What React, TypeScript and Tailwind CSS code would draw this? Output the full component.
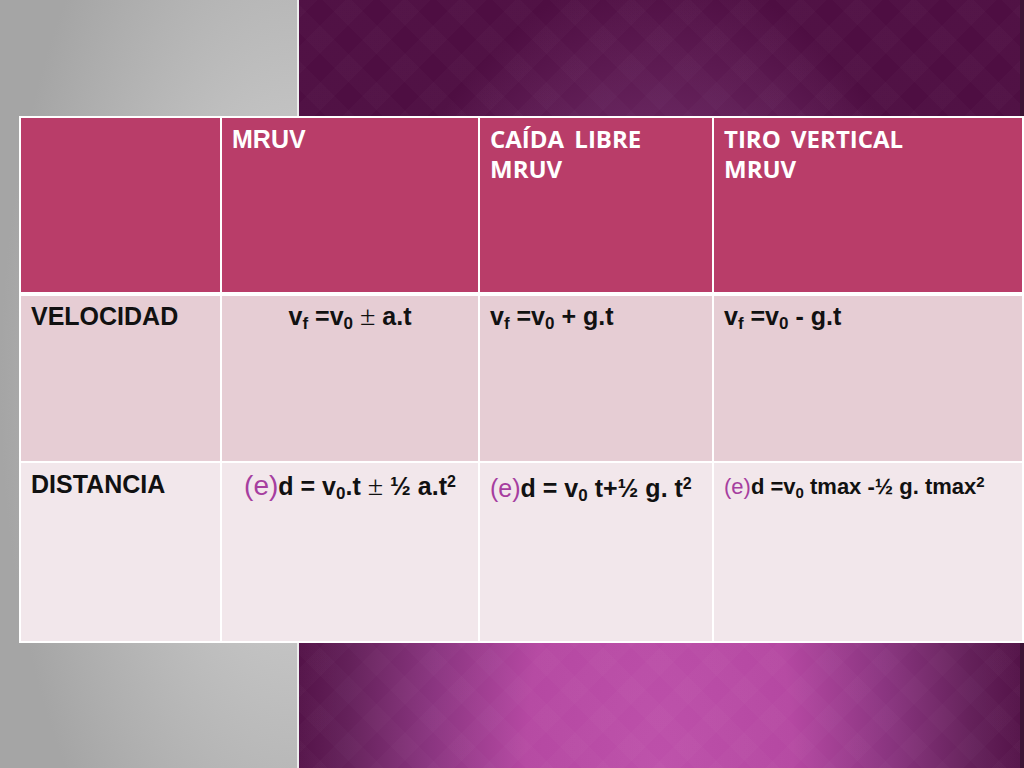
import React from "react";

const arial = "font-['Liberation_Sans',Arial,sans-serif]";

function Cell({ w, bg, className = "", children }: { w: string; bg: string; className?: string; children?: React.ReactNode }) {
  return <div className={`${w} ${bg} shrink-0 px-[10px] ${className}`}>{children}</div>;
}

function PM() {
  return <span className="font-['Liberation_Serif','Times_New_Roman',serif] font-normal text-[28px] leading-[30px]">±</span>;
}

function E({ size }: { size: string }) {
  return <span className={`${size} font-normal text-[#a63e9f]`}>(e)</span>;
}

export default function App() {
  return (
    <div className={`w-[1024px] h-[768px] overflow-hidden grid ${arial}`}>
      {/* background */}
      <div className="col-start-1 row-start-1 flex h-[768px]">
        <div className="w-[297px] [background-image:radial-gradient(ellipse_100%_80%_at_100%_50%,#d0d0d0_0%,#c4c4c4_40%,#a5a5a5_100%)]" />
        <div className="w-[2px] bg-[#ececec]" />
        <div className="flex-1 [background-image:repeating-linear-gradient(45deg,rgba(255,255,255,0.014)_0_20px,transparent_20px_40px),repeating-linear-gradient(-45deg,rgba(255,255,255,0.014)_0_20px,transparent_20px_40px),radial-gradient(ellipse_53%_104%_at_50%_100%,#bd50aa_0%,#b548a2_35%,#8a3580_60%,#64215a_82%,#4e0e42_100%)]" />
        <div className="w-[4px] bg-[#3b1434]" />
      </div>

      {/* table */}
      <div className="col-start-1 row-start-1 self-start ml-[19px] mt-[116px] w-[1005px] bg-white p-[2px] flex flex-col gap-[2px]">
        {/* header */}
        <div className="flex gap-[2px] h-[174px] mb-[2px] text-white">
          <Cell w="w-[199px]" bg="bg-[#b93d69]" />
          <Cell w="w-[256px]" bg="bg-[#b93d69]" className="pt-[6px] text-[25px] leading-[30px] font-bold">
            MRUV
          </Cell>
          <Cell w="w-[232px]" bg="bg-[#b93d69]" className="pt-[6px] text-[24px] leading-[30px] font-bold font-['Open_Sans',sans-serif] [word-spacing:4px]">
            <div>CAÍDA LIBRE</div>
            <div>MRUV</div>
          </Cell>
          <Cell w="w-[308px]" bg="bg-[#b93d69]" className="pt-[6px] text-[24px] leading-[30px] font-bold font-['Open_Sans',sans-serif] [word-spacing:4px]">
            <div>TIRO VERTICAL</div>
            <div>MRUV</div>
          </Cell>
        </div>

        {/* velocidad */}
        <div className="flex gap-[2px] h-[165px] text-[#111] font-bold text-[25px] leading-[30px]">
          <Cell w="w-[199px]" bg="bg-[#e6cdd4]" className="pt-[5px]">
            VELOCIDAD
          </Cell>
          <Cell w="w-[256px]" bg="bg-[#e6cdd4]" className="pt-[5px] text-center">
            v<sub className="text-[17px]">f</sub> =v<sub className="text-[17px]">0</sub> <PM /> a.t
          </Cell>
          <Cell w="w-[232px]" bg="bg-[#e6cdd4]" className="pt-[5px]">
            v<sub className="text-[17px]">f</sub> =v<sub className="text-[17px]">0</sub> + g.t
          </Cell>
          <Cell w="w-[308px]" bg="bg-[#e6cdd4]" className="pt-[5px]">
            v<sub className="text-[17px]">f</sub> =v<sub className="text-[17px]">0</sub> - g.t
          </Cell>
        </div>

        {/* distancia */}
        <div className="flex gap-[2px] h-[178px] text-[#111] font-bold text-[25px] leading-[30px]">
          <Cell w="w-[199px]" bg="bg-[#f2e7eb]" className="pt-[6px]">
            DISTANCIA
          </Cell>
          <Cell w="w-[256px]" bg="bg-[#f2e7eb]" className="pt-[8px] text-center whitespace-nowrap">
            <E size="text-[28px]" />d = v<sub className="text-[17px]">0</sub>.t <PM /> ½ a.t<sup className="text-[16px]">2</sup>
          </Cell>
          <Cell w="w-[232px]" bg="bg-[#f2e7eb]" className="pt-[10px] whitespace-nowrap">
            <E size="text-[25px]" />d = v<sub className="text-[17px]">0</sub> t+½ g. t<sup className="text-[16px]">2</sup>
          </Cell>
          <Cell w="w-[308px]" bg="bg-[#f2e7eb]" className="pt-[9px] text-[22px] whitespace-nowrap">
            <E size="text-[22px]" />d =v<sub className="text-[15px]">0</sub> tmax -½ g. tmax<sup className="text-[15px]">2</sup>
          </Cell>
        </div>
      </div>
    </div>
  );
}
